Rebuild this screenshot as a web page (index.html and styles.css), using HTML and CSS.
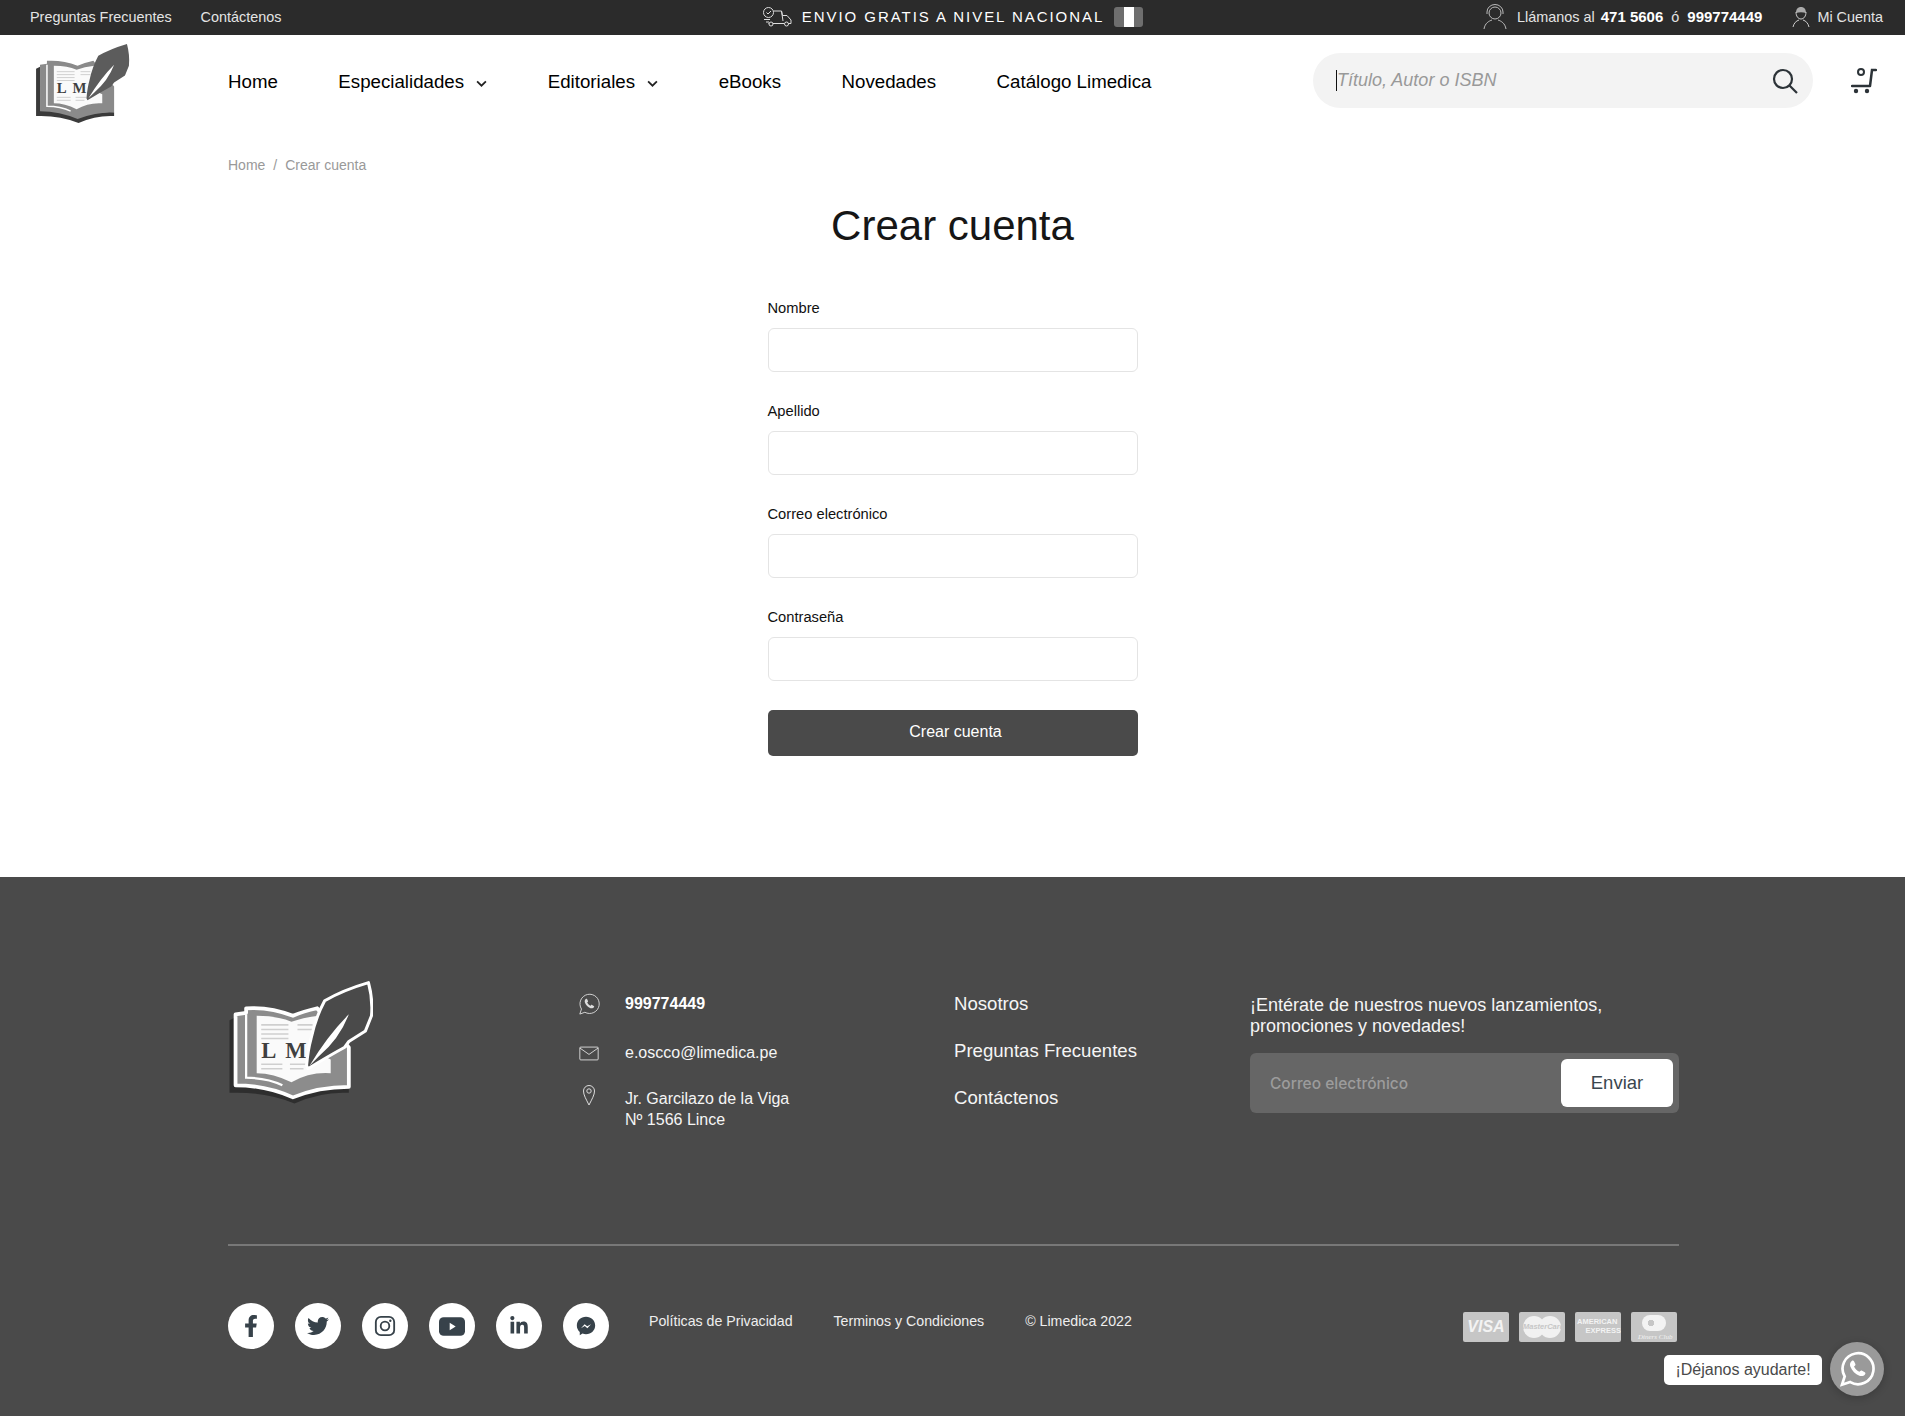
FILE: index.html
```html
<!DOCTYPE html>
<html lang="es">
<head>
  <meta charset="UTF-8"/>
  <meta name="viewport" content="width=device-width,initial-scale=1"/>
  <title>Crear cuenta - Limedica</title>
  <link rel="stylesheet" href="styles.css">
</head>
<body>

  <svg class="svg-defs" aria-hidden="true">
    <symbol id="logo" viewBox="0 0 96 82">
      <path class="lg-shadow" d="M1 26 L5 24 L5 68 Q25 68 43 76 Q60 69 80 70 L80 74 Q62 73 44 81 Q24 73 1 74Z"/>
      <path class="lg-book" d="M5 22 L12 21 L12 18 Q28 17 43 23 Q50 20 59 18 L80 44 L80 70 Q60 70 43 77 Q25 69 5 69Z"/>
      <path class="lg-fold" d="M12 22V64Q26 64 36 69"/>
      <path class="lg-page" d="M19 23 Q33 23 42 27 Q50 24 60 23 L60 48 L68 52 L68 61 Q54 60 42 67 Q30 61 19 61Z"/>
      <path class="lg-lines" d="M22 29H40M22 32H40M22 35H40M22 38H40M46 29H56M46 32H56M22 55H36M41 55H52M22 58H36M41 58H50"/>
      <text class="lg-text" x="22" y="51">L M</text>
      <path class="lg-feather" d="M93 1 Q96 12 95 23 L91 33 L80 40 L77 44 Q66 50 53 58 L52 56 Q53 45 55 38 Q58 24 64 13 Q76 6 93 1Z"/>
      <path class="lg-vein" d="M54 56 Q66 36 80 22 Q74 38 60 50Z"/>
    </symbol>
    <symbol id="wa-phone" viewBox="0 0 24 24">
      <path d="M8.500 6.600c-.9.700-1.600 2-.9 3.900 1 2.600 3.300 5 6 6 1.700.6 3 0 3.700-.9.500-.6.400-1.200-.1-1.500l-1.800-1c-.5-.3-.9-.2-1.200.2l-.5.6c-1.600-.7-2.900-2-3.700-3.600l.6-.5c.4-.3.500-.7.300-1.200l-.9-1.800c-.3-.6-.9-.7-1.500-.2z"/>
    </symbol>
  </svg>

  <div class="topbar">
    <div class="topbar-left">
      <a href="#">Preguntas Frecuentes</a>
      <a href="#">Contáctenos</a>
    </div>
    <div class="topbar-center">
      <svg class="truck-icon" viewBox="0 0 30 20">
        <circle cx="6.500" cy="5.500" r="5"/>
        <path d="M4.500 5.500l1.500 1.500 3-3M11.500 4H19.500L20.500 8.500M20.500 8.500H25L29 13V16.500H26.500M11 16.500H22M6.500 16.500H7M2 12.500H8M4 15H7M19.500 4L21 14"/>
        <circle cx="9" cy="17" r="2"/>
        <circle cx="24.500" cy="17" r="2"/>
      </svg>
      <span class="shipping-text">ENVIO GRATIS A NIVEL NACIONAL</span>
      <span class="flag"><i></i></span>
    </div>
    <div class="topbar-right">
      <svg class="agent-icon" viewBox="0 0 24 26">
        <circle cx="12" cy="9" r="6"/>
        <path d="M4 10V8a8 7.500 0 0 1 16 0v2M1 25c1-6 5-8 8-9M23 25c-1-6-5-8-8-9"/>
      </svg>
      <span class="call">Llámanos al <b class="call-first">471 5606</b><span class="call-or">ó</span><b>999774449</b></span>
      <svg class="person-icon" viewBox="0 0 18 22">
        <path class="person-hair" d="M4 7C4 3 6 1 9 1s5 2 5 6C11 6 7 6 4 7z"/>
        <path d="M4 6c0 4 2 7 5 7s5-3 5-7M1 21c1-4 3-6 6-7M17 21c-1-4-3-6-6-7"/>
      </svg>
      <a href="#" class="account-link">Mi Cuenta</a>
    </div>
  </div>

  <header class="site-header">
    <a href="#" class="logo-link"><svg class="logo"><use href="#logo"/></svg></a>
    <nav class="main-nav">
      <a href="#">Home</a>
      <a href="#">Especialidades <svg class="chevron" viewBox="0 0 10 6"><path d="M1 1l4 4 4-4"/></svg></a>
      <a href="#">Editoriales <svg class="chevron" viewBox="0 0 10 6"><path d="M1 1l4 4 4-4"/></svg></a>
      <a href="#">eBooks</a>
      <a href="#">Novedades</a>
      <a href="#">Catálogo Limedica</a>
    </nav>
    <div class="search-box">
      <span class="caret"></span>
      <input type="text" placeholder="Título, Autor o ISBN">
      <svg class="search-icon" viewBox="0 0 26 26"><circle cx="11" cy="11" r="9"/><path d="M17.500 17.500L25 25"/></svg>
    </div>
    <svg class="cart-icon" viewBox="0 0 26 26">
      <circle class="cart-ring" cx="10" cy="4" r="3"/>
      <path class="cart-line" d="M25 2H21L19 18M1 18H19"/>
      <circle cx="5" cy="23" r="2.200"/>
      <circle cx="16" cy="23" r="2.200"/>
    </svg>
  </header>

  <main class="page">
    <div class="breadcrumb"><a href="#">Home</a><span>/</span><a href="#">Crear cuenta</a></div>
    <h1>Crear cuenta</h1>
    <form class="register-form">
      <div class="field">
        <label for="nombre">Nombre</label>
        <input id="nombre" type="text">
      </div>
      <div class="field">
        <label for="apellido">Apellido</label>
        <input id="apellido" type="text">
      </div>
      <div class="field">
        <label for="correo">Correo electrónico</label>
        <input id="correo" type="email">
      </div>
      <div class="field">
        <label for="clave">Contraseña</label>
        <input id="clave" type="password">
      </div>
      <button type="button" class="submit-btn">Crear cuenta</button>
    </form>
  </main>

  <footer class="site-footer">
    <div class="footer-top">
      <div class="footer-logo"><svg class="logo-big"><use href="#logo"/></svg></div>

      <ul class="contact-list">
        <li class="contact-phone">
          <svg class="contact-icon" viewBox="0 0 24 24">
            <path d="M2 23l1.800-5.500A10.500 10.500 0 1 1 7.500 21z"/>
            <use href="#wa-phone"/>
          </svg>
          <b>999774449</b>
        </li>
        <li class="contact-mail">
          <svg class="contact-icon" viewBox="0 0 24 16"><rect x="2" y="1" width="20" height="14" rx="1"/><path d="M2 2l10 7 10-7"/></svg>
          <span>e.oscco@limedica.pe</span>
        </li>
        <li class="contact-address">
          <svg class="contact-icon pin" viewBox="0 0 14 22"><path d="M7 21C4 15 1.500 11 1.500 7a5.500 5.500 0 0 1 11 0c0 4-2.500 8-5.500 14z"/><circle cx="7" cy="7" r="2.200"/></svg>
          <span>Jr. Garcilazo de la Viga<br>Nº 1566 Lince</span>
        </li>
      </ul>

      <ul class="footer-links">
        <li><a href="#">Nosotros</a></li>
        <li><a href="#">Preguntas Frecuentes</a></li>
        <li><a href="#">Contáctenos</a></li>
      </ul>

      <div class="newsletter">
        <p>¡Entérate de nuestros nuevos lanzamientos, promociones y novedades!</p>
        <div class="newsletter-box">
          <input type="email" placeholder="Correo electrónico">
          <button type="button">Enviar</button>
        </div>
      </div>
    </div>

    <div class="footer-bottom">
      <div class="socials">
        <a href="#"><svg viewBox="0 0 320 512"><path d="M279.14 288l14.22-92.66h-88.91v-60.13c0-25.35 12.42-50.06 52.24-50.06h40.42V6.26S260.43 0 225.36 0c-73.22 0-121.08 44.38-121.08 124.72v70.62H22.89V288h81.39v224h100.17V288z"/></svg></a>
        <a href="#"><svg viewBox="0 0 512 512"><path d="M459.37 151.716c.325 4.548.325 9.097.325 13.645 0 138.72-105.583 298.558-298.558 298.558-59.452 0-114.68-17.219-161.137-47.106 8.447.974 16.568 1.299 25.34 1.299 49.055 0 94.213-16.568 130.274-44.832-46.132-.975-84.792-31.188-98.112-72.772 6.498.974 12.995 1.624 19.818 1.624 9.421 0 18.843-1.3 27.614-3.573-48.081-9.747-84.143-51.98-84.143-102.985v-1.299c13.969 7.797 30.214 12.67 47.431 13.319-28.264-18.843-46.781-51.005-46.781-87.391 0-19.492 5.197-37.36 14.294-52.954 51.655 63.675 129.3 105.258 216.365 109.807-1.624-7.797-2.599-15.918-2.599-24.04 0-57.828 46.782-104.934 104.934-104.934 30.213 0 57.502 12.67 76.67 33.137 23.715-4.548 46.456-13.32 66.599-25.34-7.798 24.366-24.366 44.833-46.132 57.827 21.117-2.273 41.584-8.122 60.426-16.243-14.292 20.791-32.161 39.308-52.628 54.253z"/></svg></a>
        <a href="#"><svg class="insta" viewBox="0 0 24 24"><rect x="2" y="2" width="20" height="20" rx="5.500"/><circle cx="12" cy="12" r="4.700"/><circle class="dot" cx="17.800" cy="6.200" r="1.300"/></svg></a>
        <a href="#"><svg class="yt" viewBox="0 0 28 20"><rect width="28" height="20" rx="5"/><path class="yt-play" d="M11.500 6l6.500 4-6.500 4z"/></svg></a>
        <a href="#"><svg class="in" viewBox="0 0 448 512"><path d="M100.280 448H7.400V148.900h92.880zM53.790 108.100C24.090 108.100 0 83.500 0 53.800a53.790 53.790 0 0 1 107.580 0c0 29.700-24.100 54.300-53.790 54.300zM447.900 448h-92.680V302.400c0-34.700-.7-79.200-48.290-79.200-48.290 0-55.690 37.700-55.690 76.700V448h-92.780V148.900h89.080v40.800h1.300c12.400-23.500 42.690-48.300 87.880-48.300 94 0 111.280 61.900 111.280 142.300V448z"/></svg></a>
        <a href="#"><svg viewBox="0 0 24 24"><path d="M12 2C6.300 2 2 6.100 2 11.500c0 2.900 1.200 5.300 3.200 7V22l3-1.700c1.200.4 2.500.6 3.800.6 5.700 0 10-4.100 10-9.400S17.700 2 12 2z"/><path class="msg-zig" d="M6.500 14.500l4-4.500 2.800 2.400 4.200-2.400-4 4.500-2.800-2.400z"/></svg></a>
      </div>
      <div class="legal">
        <a href="#">Políticas de Privacidad</a>
        <a href="#">Terminos y Condiciones</a>
        <span>© Limedica 2022</span>
      </div>
      <div class="payments">
        <span class="pay pay-visa">VISA</span>
        <span class="pay pay-mc"><i></i><i></i><em>MasterCard</em></span>
        <span class="pay pay-amex">AMERICAN<br><u>EXPRESS</u></span>
        <span class="pay pay-diners"><i></i><em>Diners Club</em></span>
      </div>
    </div>
  </footer>

  <a href="#" class="chat-widget">
    <span class="chat-label">¡Déjanos ayudarte!</span>
    <span class="chat-btn">
      <svg viewBox="0 0 24 24">
        <path class="chat-bubble" d="M2 22.500l1.800-5.500A10.300 10.300 0 1 1 7.500 20.700z"/>
        <use href="#wa-phone"/>
      </svg>
    </span>
  </a>

</body>
</html>
```

FILE: styles.css
```css
* {
  box-sizing: border-box;
}

body {
  margin: 0;
  background: #fff;
  color: #111;
  font-family: "Liberation Sans", Arial, sans-serif;
  position: relative;
}

a {
  color: inherit;
  text-decoration: none;
}

ul {
  list-style: none;
  margin: 0;
  padding: 0;
}

.svg-defs {
  display: none;
}

/* top bar */

.topbar {
  display: grid;
  grid-template-columns: 1fr auto 1fr;
  align-items: center;
  height: 35px;
  padding: 0 22px 2px;
  background: #2b2b2b;
  color: #e4e4e4;
  font-size: 14.400px;
}

.topbar-left {
  display: flex;
  gap: 29px;
  padding-left: 8px;
}

.topbar-center {
  display: flex;
  align-items: center;
  gap: 10px;
  color: #fff;
}

.truck-icon {
  width: 30px;
  height: 20px;
  fill: none;
  stroke: #ddd;
  stroke-width: 1;
}

.shipping-text {
  font-size: 15px;
  letter-spacing: 1.950px;
}

.flag {
  display: flex;
  justify-content: center;
  width: 29px;
  height: 20px;
  background: #6e6e6e;
  border-radius: 3px;
}

.flag i {
  width: 10px;
  background: #fff;
}

.topbar-right {
  display: flex;
  align-items: center;
  justify-content: flex-end;
}

.agent-icon {
  width: 24px;
  height: 26px;
  margin-right: 10px;
  fill: none;
  stroke: #bbb;
  stroke-width: 1;
}

.call b {
  color: #fff;
  font-size: 15px;
}

.call .call-first {
  margin-left: 2px;
}

.call-or {
  margin: 0 8px;
}

.person-icon {
  width: 18px;
  height: 22px;
  margin: 0 7px 0 30px;
  fill: none;
  stroke: #ccc;
  stroke-width: 1;
}

.person-hair {
  fill: #aaa;
  stroke: none;
}

/* header */

.site-header {
  display: flex;
  align-items: center;
  height: 95px;
  padding: 0 28px 0 35px;
}

.logo-link {
  display: block;
  width: 193px;
  height: 80px;
}

.logo {
  display: block;
  width: 95px;
  height: 81px;
  --shadow: #3a3a3a;
  --book: #8a8a8a;
  --feather: #5c5c5c;
  --edge: none;
}

.logo-big {
  display: block;
  width: 145px;
  height: 124px;
  --shadow: #2e2e2e;
  --book: #8c8c8c;
  --feather: #4a4a4a;
  --edge: #fff;
}

.lg-shadow {
  fill: var(--shadow);
}

.lg-book {
  fill: var(--book);
  stroke: var(--edge);
  stroke-width: 2.500;
  stroke-linejoin: round;
}

.lg-fold {
  fill: none;
  stroke: #fff;
  stroke-width: 1.500;
}

.lg-page {
  fill: #fafafa;
}

.lg-lines {
  fill: none;
  stroke: #cfcfcf;
  stroke-width: 1;
}

.lg-text {
  fill: #404040;
  font-family: "Liberation Serif", serif;
  font-size: 15px;
  font-weight: bold;
  word-spacing: 3px;
}

.lg-feather {
  fill: var(--feather);
  stroke: var(--edge);
  stroke-width: 2;
  stroke-linejoin: round;
}

.lg-vein {
  fill: #fff;
}

.main-nav {
  display: flex;
  align-items: center;
  gap: 60.500px;
  margin-bottom: 2px;
  font-size: 18.700px;
  color: #000;
}

.main-nav a {
  display: flex;
  align-items: center;
  gap: 7px;
  white-space: pre;
}

.chevron {
  width: 11px;
  height: 7px;
  margin-top: 3px;
  fill: none;
  stroke: #222;
  stroke-width: 1.600;
}

.search-box {
  display: flex;
  align-items: center;
  width: 500px;
  height: 55px;
  margin: 0 0 4px auto;
  padding: 0 15px 0 23px;
  background: #f3f3f3;
  border-radius: 28px;
}

.caret {
  width: 1px;
  height: 21px;
  background: #111;
}

.search-box input {
  flex: 1;
  min-width: 0;
  border: 0;
  outline: 0;
  padding: 0;
  background: none;
  font: italic 18px "Liberation Sans", Arial, sans-serif;
}

.search-box input::placeholder {
  color: #999;
  opacity: 1;
}

.search-icon {
  width: 26px;
  height: 26px;
  fill: none;
  stroke: #2c3338;
  stroke-width: 2.200;
}

.cart-icon {
  width: 26px;
  height: 26px;
  margin: 0 0 3px 38px;
  fill: #2c3338;
}

.cart-ring {
  fill: none;
  stroke: #2c3338;
  stroke-width: 2;
}

.cart-line {
  fill: none;
  stroke: #2c3338;
  stroke-width: 2.500;
  stroke-linecap: round;
}

/* page content */

.page {
  padding: 26px 0 121px;
}

.breadcrumb {
  display: flex;
  gap: 8px;
  padding-left: 228px;
  font-size: 14px;
  line-height: 18px;
  color: #999;
}

.page h1 {
  margin: 22px 0 0;
  font-size: 42px;
  font-weight: 400;
  line-height: 60px;
  text-align: center;
  color: #161616;
}

.register-form {
  width: 370px;
  margin: 43px auto 0;
}

.field {
  margin-bottom: 30px;
}

.field label {
  display: block;
  margin-bottom: 10px;
  font-size: 14.700px;
  line-height: 19px;
  color: #111;
}

.field input {
  display: block;
  width: 100%;
  height: 44px;
  padding: 0 12px;
  background: #fff;
  border: 1px solid #e4e4e4;
  border-radius: 6px;
  outline: 0;
}

.submit-btn {
  display: block;
  width: 100%;
  height: 46px;
  margin-top: -1px;
  padding: 0 0 2px 6px;
  background: #4a4a4a;
  border: 0;
  border-radius: 5px;
  color: #fff;
  font: 16px "Liberation Sans", Arial, sans-serif;
}

/* footer */

.site-footer {
  height: 540px;
  padding: 104px 226px 0 228px;
  background: #4a4a4a;
  color: #f5f5f5;
}

.footer-top {
  display: grid;
  grid-template-columns: 350px 376px 296px 1fr;
  height: 265px;
  border-bottom: 2px solid #787878;
}

.contact-list {
  padding-top: 12px;
  font-size: 16px;
  line-height: 21px;
}

.contact-list li {
  display: flex;
  align-items: flex-start;
}

.contact-icon {
  flex: none;
  width: 22px;
  height: 22px;
  margin-right: 25px;
  fill: none;
  stroke: #ddd;
  stroke-width: 1;
}

.contact-icon use {
  fill: #ddd;
  stroke: none;
}

.contact-phone {
  height: 49px;
}

.contact-mail {
  height: 44px;
}

.contact-mail .contact-icon {
  height: 15px;
  margin-top: 4px;
}

.contact-phone b {
  color: #fff;
}

.contact-address {
  margin-top: -2px;
}

.contact-address span {
  margin-top: 4px;
}

.footer-links {
  display: flex;
  flex-direction: column;
  gap: 25px;
  padding-top: 12px;
  font-size: 18.600px;
  line-height: 22px;
}

.newsletter {
  padding-top: 14px;
}

.newsletter p {
  margin: 0 0 16px;
  font-size: 18px;
  line-height: 21px;
  max-width: 380px;
}

.newsletter-box {
  display: flex;
  align-items: center;
  height: 60px;
  padding: 0 6px 0 20px;
  background: #666;
  border-radius: 6px;
}

.newsletter-box input {
  flex: 1;
  min-width: 0;
  border: 0;
  outline: 0;
  padding: 0;
  background: none;
  color: #fff;
  font: 500 15.500px Inter, "Liberation Sans", sans-serif;
}

.newsletter-box input::placeholder {
  color: #9c9c9c;
  opacity: 1;
}

.newsletter-box button {
  width: 112px;
  height: 48px;
  background: #fff;
  border: 0;
  border-radius: 6px;
  color: #3a464e;
  font: 18.500px "Liberation Sans", Arial, sans-serif;
}

.footer-bottom {
  display: flex;
  align-items: flex-start;
  padding-top: 57px;
}

.socials {
  display: flex;
  gap: 21px;
}

.socials a {
  display: flex;
  align-items: center;
  justify-content: center;
  width: 46px;
  height: 46px;
  background: #fff;
  border-radius: 50%;
}

.socials svg {
  width: 22px;
  height: 22px;
  fill: #37424a;
}

.socials .insta {
  fill: none;
  stroke: #37424a;
  stroke-width: 2;
}

.socials .insta .dot {
  fill: #37424a;
  stroke: none;
}

.socials .yt {
  width: 26px;
  height: 19px;
}

.socials .yt-play {
  fill: #fff;
}

.socials .in {
  width: 18px;
  height: 20px;
}

.socials .msg-zig {
  fill: #fff;
}

.legal {
  display: flex;
  gap: 41px;
  margin-left: 40px;
  padding-top: 9px;
  font-size: 14.200px;
  line-height: 18px;
  color: #eee;
}

.payments {
  display: flex;
  gap: 10px;
  margin: 0 2px 0 auto;
  padding-top: 9px;
}

.pay {
  position: relative;
  display: block;
  width: 46px;
  height: 30px;
  overflow: hidden;
  background: #c6c6c6;
  border-radius: 2px;
  color: #f3f3f3;
}

.pay-visa {
  font-size: 16px;
  font-style: italic;
  font-weight: bold;
  line-height: 30px;
  text-align: center;
}

.pay-mc i {
  position: absolute;
  top: 4px;
  width: 22px;
  height: 22px;
  background: #f1f1f1;
  border-radius: 50%;
}

.pay-mc i:first-child {
  left: 4px;
}

.pay-mc i:nth-child(2) {
  right: 4px;
}

.pay-mc em {
  position: absolute;
  top: 10px;
  left: 4px;
  color: #c6c6c6;
  font-size: 7.500px;
  font-style: italic;
  font-weight: bold;
  line-height: 9px;
}

.pay-amex {
  padding: 6px 0 0 2px;
  font-size: 7.500px;
  font-weight: bold;
  line-height: 8.500px;
}

.pay-amex u {
  display: block;
  text-align: right;
  text-decoration: none;
}

.pay-diners i {
  position: absolute;
  top: 3px;
  left: 11px;
  width: 24px;
  height: 16px;
  background: radial-gradient(circle at 9px 8px, #c6c6c6 0 3px, #f3f3f3 3px);
  border-radius: 8px;
}

.pay-diners em {
  position: absolute;
  left: 7px;
  bottom: 1px;
  font-family: "Liberation Serif", serif;
  font-size: 7px;
  line-height: 8px;
  white-space: nowrap;
}

/* chat button floats over the footer */

.chat-widget {
  position: absolute;
  left: 1664px;
  top: 1342px;
  display: flex;
  align-items: center;
  gap: 8px;
}

.chat-label {
  display: block;
  width: 158px;
  height: 30px;
  margin-top: 2px;
  background: #fff;
  border-radius: 5px;
  color: #4a4a4a;
  font-size: 16px;
  line-height: 29px;
  text-align: center;
}

.chat-btn {
  display: flex;
  align-items: center;
  justify-content: center;
  width: 54px;
  height: 54px;
  background: #9a9a9a;
  border-radius: 50%;
  box-shadow: 0 2px 8px rgba(0, 0, 0, 0.2);
}

.chat-btn svg {
  width: 36px;
  height: 36px;
}

.chat-btn use {
  fill: #fff;
}

.chat-bubble {
  fill: none;
  stroke: #fff;
  stroke-width: 1.800;
}
```
